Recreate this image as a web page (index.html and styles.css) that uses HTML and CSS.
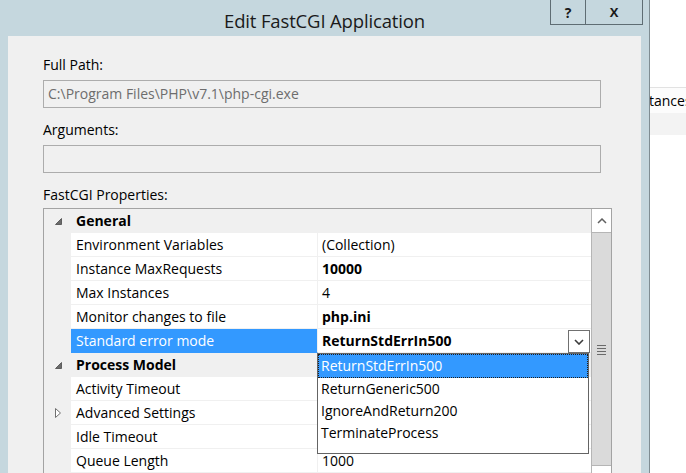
FILE: index.html
```html
<!DOCTYPE html>
<html>
<head>
<meta charset="utf-8">
<link rel="stylesheet" href="styles.css">
</head>
<body>
<div class="desktop">
  <div class="window">
    <div class="titlebar">
      <div class="title">Edit FastCGI Application</div>
      <div class="caption">
        <div class="cbtn help">?</div>
        <div class="cbtn close">X</div>
      </div>
    </div>
    <div class="client">
      <div class="label">Full Path:</div>
      <div class="textbox">C:\Program Files\PHP\v7.1\php-cgi.exe</div>
      <div class="label">Arguments:</div>
      <div class="textbox"></div>
      <div class="label">FastCGI Properties:</div>
      <div class="pgrid">
        <div class="rows">
          <div class="row cat">
            <span class="margin"><svg class="exp" width="7" height="7" viewBox="0 0 7 7"><polygon points="6.5,0.5 6.5,6.5 0.5,6.5" fill="#6b6b6b" stroke="#4a4a4a" stroke-width="0.8"/></svg></span>
            <span class="catname">General</span>
          </div>
          <div class="row"><span class="margin"></span><span class="name">Environment Variables</span><span class="value">(Collection)</span></div>
          <div class="row"><span class="margin"></span><span class="name">Instance MaxRequests</span><span class="value bold">10000</span></div>
          <div class="row"><span class="margin"></span><span class="name">Max Instances</span><span class="value">4</span></div>
          <div class="row"><span class="margin"></span><span class="name">Monitor changes to file</span><span class="value bold">php.ini</span></div>
          <div class="row"><span class="margin"></span><span class="name selected">Standard error mode</span><span class="value bold editing"><span class="vtext">ReturnStdErrIn500</span><span class="ddbtn"><svg width="10" height="6" viewBox="0 0 10 6"><polyline points="1,1 5,5 9,1" fill="none" stroke="#3c3c3c" stroke-width="1.6"/></svg></span></span></div>
          <div class="row cat">
            <span class="margin"><svg class="exp" width="7" height="7" viewBox="0 0 7 7"><polygon points="6.5,0.5 6.5,6.5 0.5,6.5" fill="#6b6b6b" stroke="#4a4a4a" stroke-width="0.8"/></svg></span>
            <span class="catname">Process Model</span>
          </div>
          <div class="row"><span class="margin"></span><span class="name">Activity Timeout</span><span class="value"></span></div>
          <div class="row"><span class="margin"><svg class="col" width="6" height="10" viewBox="0 0 6 10"><polygon points="0.5,0.5 5.5,5 0.5,9.5" fill="#fff" stroke="#707070" stroke-width="1"/></svg></span><span class="name">Advanced Settings</span><span class="value"></span></div>
          <div class="row"><span class="margin"></span><span class="name">Idle Timeout</span><span class="value"></span></div>
          <div class="row"><span class="margin"></span><span class="name">Queue Length</span><span class="value">1000</span></div>
        </div>
        <div class="vscroll">
          <div class="sb-up"><svg width="10" height="6" viewBox="0 0 10 6"><polyline points="1,5 5,1 9,5" fill="none" stroke="#606060" stroke-width="1.5"/></svg></div>
          <div class="sb-thumb"><svg width="9" height="11" viewBox="0 0 9 11"><g stroke="#6a6a6a" stroke-width="1"><line x1="0" y1="1.5" x2="9" y2="1.5"/><line x1="0" y1="4.5" x2="9" y2="4.5"/><line x1="0" y1="7.5" x2="9" y2="7.5"/><line x1="0" y1="10.5" x2="9" y2="10.5"/></g></svg></div>
          <div class="sb-track"></div>
        </div>
        <div class="dropdown">
          <div class="dd-item sel">ReturnStdErrIn500</div>
          <div class="dd-item">ReturnGeneric500</div>
          <div class="dd-item">IgnoreAndReturn200</div>
          <div class="dd-item">TerminateProcess</div>
        </div>
      </div>
    </div>
  </div>
  <div class="behind">
    <div class="bh-row">tances</div>
    <div class="bh-band"></div>
  </div>
</div>
</body>
</html>
```

FILE: styles.css
```css
html, body {
  margin: 0;
  padding: 0;
}
body {
  width: 686px;
  height: 473px;
  overflow: hidden;
  font-family: "Open Sans", "Noto Sans", sans-serif;
  font-size: 14px;
  color: #000;
}
* {
  box-sizing: border-box;
}
.desktop {
  display: flex;
  width: 686px;
  height: 473px;
  background: #fff;
  overflow: hidden;
}
.window {
  width: 650px;
  flex: none;
  background: #c5d7de;
  border-right: 1px solid #7f8d93;
  display: flex;
  flex-direction: column;
}
.titlebar {
  height: 36px;
  flex: none;
  display: grid;
  grid-template-columns: 99px 1fr 99px;
  align-items: start;
}
.title {
  grid-column: 2;
  text-align: center;
  font-size: 18.5px;
  line-height: 22px;
  padding-top: 10px;
  color: #1a1a1a;
  letter-spacing: -0.15px;
}
.caption {
  grid-column: 3;
  justify-self: end;
  margin-right: 6px;
  display: flex;
  height: 25px;
}
.cbtn {
  height: 25px;
  border: 1px solid #5f6d73;
  border-top: none;
  display: flex;
  align-items: center;
  justify-content: center;
  font-weight: 700;
  color: #1a1a1a;
}
.help {
  width: 36px;
  font-size: 14px;
}
.close {
  width: 57px;
  border-left: none;
  font-size: 13px;
}
.client {
  flex: 1;
  background: #f0f0f0;
  margin: 0 8px;
  padding: 19px 29px 0 35px;
  display: flex;
  flex-direction: column;
  min-height: 0;
}
.label {
  height: 20px;
  line-height: 20px;
  flex: none;
}
.textbox {
  height: 28px;
  flex: none;
  border: 1px solid #acacac;
  margin: 5px 11px 0 0;
  padding: 0 4px;
  line-height: 26px;
  color: #6d6d6d;
  white-space: nowrap;
}
.textbox + .label {
  margin-top: 12px;
}
.pgrid {
  position: relative;
  margin-top: 3px;
  border: 1px solid #a3a3a3;
  border-bottom: none;
  display: flex;
  flex: 1;
  min-height: 0;
}
.rows {
  flex: 1;
  display: flex;
  flex-direction: column;
}
.row {
  display: flex;
  height: 24px;
  flex: none;
}
.margin {
  width: 27px;
  flex: none;
  background: #f0f0f0;
  display: flex;
  align-items: center;
  padding-left: 11px;
}
.name {
  width: 247px;
  flex: none;
  background: #fff;
  border-right: 1px solid #f0f0f0;
  border-bottom: 1px solid #f0f0f0;
  padding-left: 5px;
  line-height: 23px;
  white-space: nowrap;
}
.name.selected {
  background: #3399ff;
  color: #fff;
  border-bottom-color: #3399ff;
}
.value {
  flex: 1;
  background: #fff;
  border-bottom: 1px solid #f0f0f0;
  padding-left: 4px;
  line-height: 23px;
  white-space: nowrap;
}
.bold {
  font-weight: 700;
}
.value.editing {
  display: flex;
  align-items: flex-start;
  justify-content: space-between;
  padding-right: 1px;
}
.ddbtn {
  width: 22px;
  height: 23px;
  margin-top: 1px;
  border: 1px solid #707070;
  background: #fff;
  display: flex;
  align-items: center;
  justify-content: center;
}
.row.cat {
  background: #f0f0f0;
}
.catname {
  font-weight: 700;
  padding-left: 5px;
  line-height: 24px;
}
.vscroll {
  width: 20px;
  flex: none;
  display: flex;
  flex-direction: column;
  background: #fff;
  border-left: 1px solid #b5b5b5;
}
.sb-up {
  height: 24px;
  flex: none;
  background: #fff;
  border-bottom: 1px solid #b5b5b5;
  display: flex;
  align-items: center;
  justify-content: center;
}
.sb-thumb {
  height: 233px;
  flex: none;
  background: #dadada;
  border-bottom: 1px solid #b5b5b5;
  display: flex;
  align-items: center;
  justify-content: center;
}
.sb-track {
  flex: 1;
  background: #fff;
}
.dropdown {
  position: absolute;
  left: 273px;
  top: 144px;
  width: 272px;
  height: 101px;
  border: 1px solid #646464;
  background: #fff;
}
.dd-item {
  height: 22px;
  line-height: 22px;
  padding-left: 3px;
  white-space: nowrap;
}
.dd-item.sel {
  height: 24px;
  line-height: 22px;
  background: #3399ff;
  color: #fff;
  border: 1px dotted #1e1e1e;
  padding-left: 2px;
}
.behind {
  flex: 1;
  padding-top: 87px;
  overflow: hidden;
}
.bh-row {
  height: 26px;
  border-top: 1px solid #e2e2e2;
  background: #fcfcfc;
  line-height: 25px;
  white-space: nowrap;
  text-indent: -1px;
  overflow: hidden;
}
.bh-band {
  height: 22px;
  background: #f3f3f3;
}
```
